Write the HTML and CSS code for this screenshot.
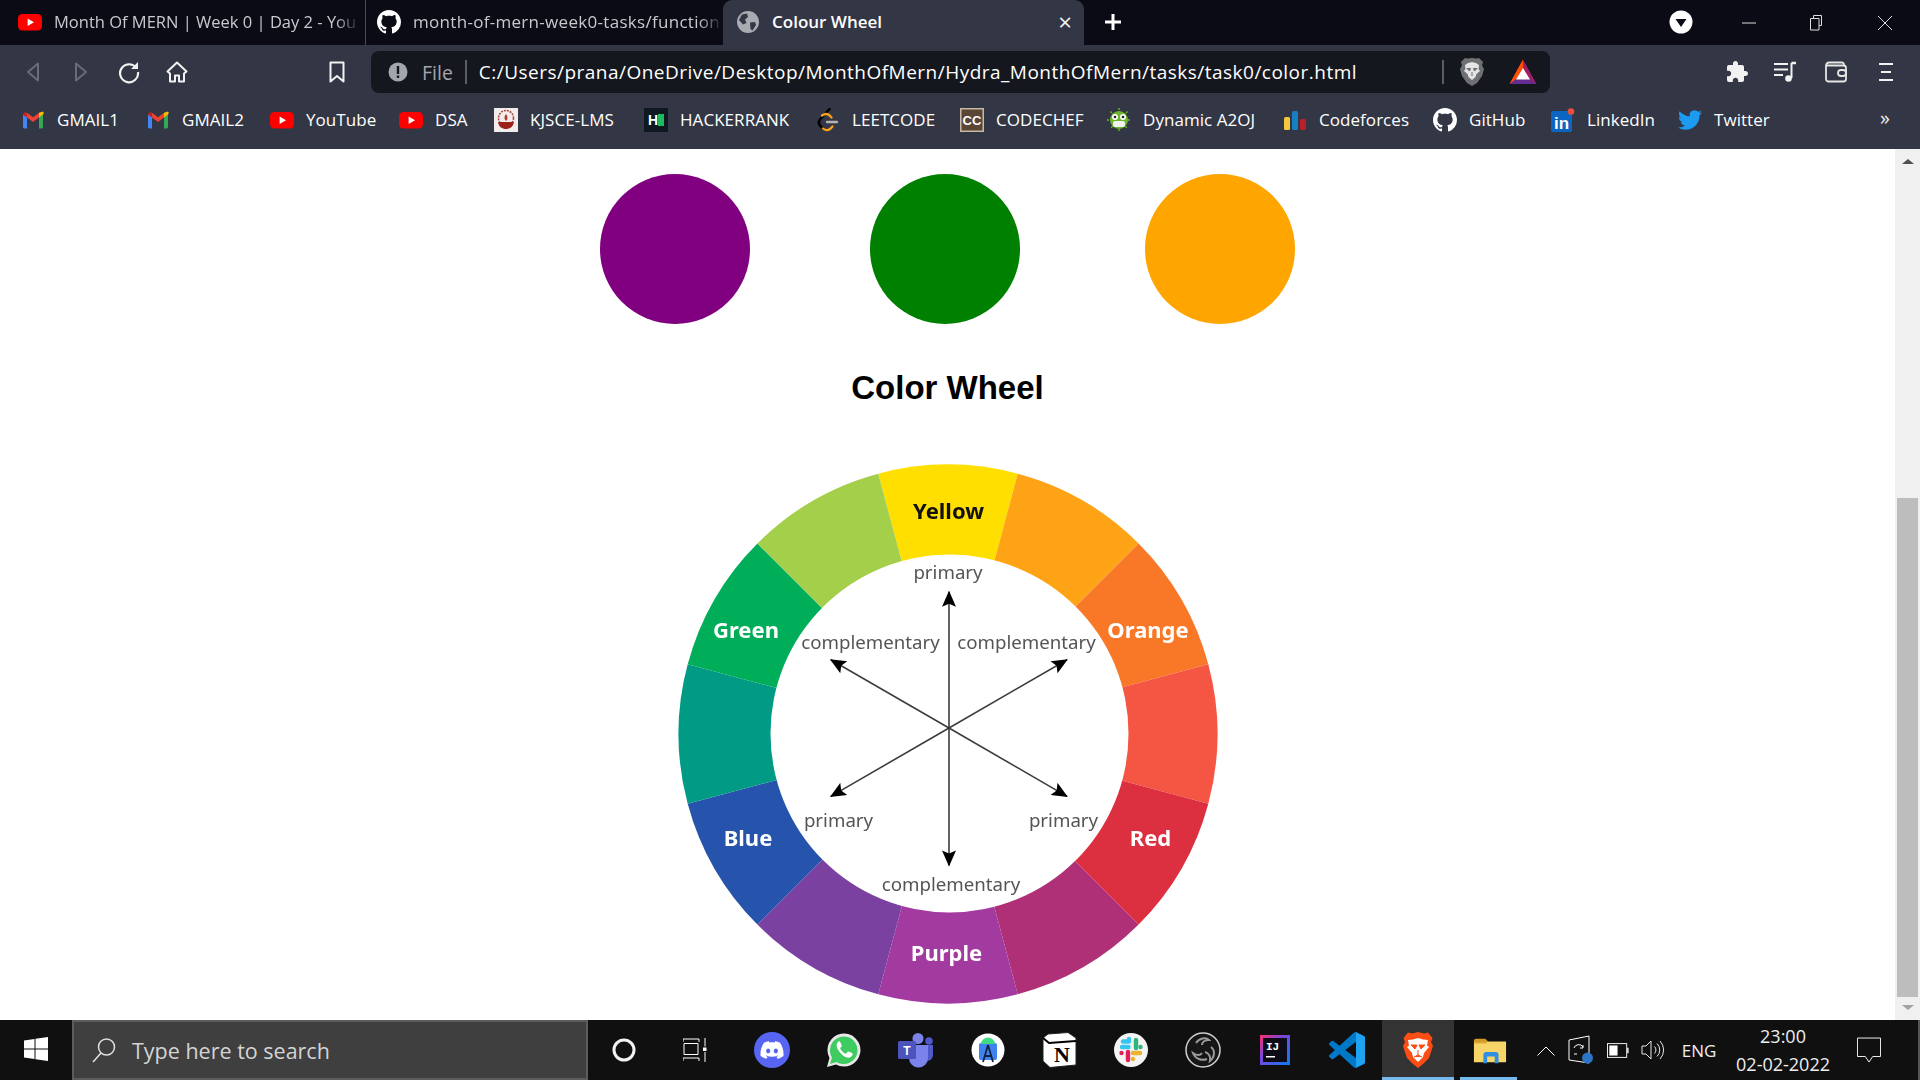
FILE: index.html
```html
<!DOCTYPE html>
<html lang="en">
<head>
<meta charset="utf-8">
<title>Colour Wheel</title>
<link rel="stylesheet" href="styles.css">
</head>
<body>
<svg class="defs" width="0" height="0" aria-hidden="true">
  <defs>
    <symbol id="i-youtube" viewBox="0 0 24 24"><rect x="0" y="4" width="24" height="16.5" rx="4.5" fill="#ff0000"/><path d="M9.6 8.4 16 12.2 9.6 16z" fill="#fff"/></symbol>
    <symbol id="i-gmail" viewBox="0 0 24 24"><path d="M2 20.5V6.5L6 9v11.5H3.5A1.5 1.5 0 0 1 2 19z" fill="#4285f4"/><path d="M18 20.5V9l4-2.500V19a1.500 1.500 0 0 1-1.500 1.500z" fill="#34a853"/><path d="M18 4.700 22 3.500A2 2 0 0 1 22 6.500L18 9.500z" fill="#fbbc04"/><path d="M6 9.500V4.700L12 9.200 18 4.700V9.500L12 14z" fill="#ea4335"/><path d="M2 6.500A2.600 2.600 0 0 1 6 4.700V9.500z" fill="#c5221f"/></symbol>
    <symbol id="i-github" viewBox="0 0 16 16"><path fill="#fff" d="M8 0C3.58 0 0 3.58 0 8c0 3.54 2.29 6.530 5.470 7.590.4.07.55-.17.55-.38 0-.19-.01-.82-.01-1.490-2.010.37-2.530-.49-2.690-.94-.09-.23-.48-.94-.82-1.130-.28-.15-.68-.52-.01-.53.63-.01 1.080.58 1.230.82.72 1.210 1.870.87 2.330.66.07-.52.28-.87.51-1.070-1.780-.2-3.640-.89-3.640-3.950 0-.87.31-1.590.82-2.150-.08-.2-.36-1.020.08-2.120 0 0 .67-.21 2.200.82.64-.18 1.320-.27 2-.27.68 0 1.360.09 2 .27 1.530-1.040 2.200-.82 2.200-.82.44 1.100.16 1.920.08 2.120.51.56.82 1.270.82 2.150 0 3.070-1.870 3.750-3.650 3.950.29.25.54.73.54 1.480 0 1.070-.01 1.930-.01 2.200 0 .21.15.46.55.38A8.013 8.013 0 0 0 16 8c0-4.420-3.580-8-8-8z"/></symbol>
  </defs>
</svg>

<header class="tabstrip">
  <div class="tab tab-first">
    <svg class="fav"><use href="#i-youtube"/></svg>
    <span class="tab-title">Month Of MERN | Week 0 | Day 2 - You</span>
  </div>
  <div class="tab tab-second">
    <svg class="fav"><use href="#i-github"/></svg>
    <span class="tab-title tab-title-long">month-of-mern-week0-tasks/function</span>
  </div>
  <div class="tab tab-active">
    <svg class="fav" viewBox="0 0 24 24"><circle cx="12" cy="12" r="11" fill="#a9abb2"/><path d="M6 4.500 11 3.500 12 7 9 9.500 10.500 13 7 14.500 3 10zM14 12.500 19 12 20 15 16.500 20.500 14.500 19z" fill="#333644"/></svg>
    <span class="tab-title-active">Colour Wheel</span>
    <span class="tab-close">×</span>
  </div>
  <svg class="newtab" viewBox="0 0 20 20"><path d="M10 2v16M2 10h16" stroke="#fff" stroke-width="3"/></svg>
  <svg class="profile" viewBox="0 0 24 24"><circle cx="12" cy="12" r="11.500" fill="#fff"/><path d="M6.500 9h11L12 17z" fill="#0a0b14"/></svg>
  <div class="winbtn"><svg viewBox="0 0 16 16" class="winicon"><path d="M1 8h14" stroke="#ddd" stroke-width="1"/></svg></div>
  <div class="winbtn"><svg viewBox="0 0 16 16" class="winicon"><path d="M4.500 3V.5h8v10H10M1.500 3.500h8.500V15H1.500z" fill="none" stroke="#ddd" stroke-width="1"/></svg></div>
  <div class="winbtn"><svg viewBox="0 0 16 16" class="winicon"><path d="M1 1l14 14M15 1 1 15" stroke="#ddd" stroke-width="1"/></svg></div>
</header>

<nav class="navbar">
  <svg class="navicon" viewBox="0 0 24 24"><path d="M17 3.500v17L7 12z" fill="none" stroke="#686b78" stroke-width="2" stroke-linejoin="round"/></svg>
  <svg class="navicon nav-gap" viewBox="0 0 24 24"><path d="M7 3.500v17L17 12z" fill="none" stroke="#686b78" stroke-width="2" stroke-linejoin="round"/></svg>
  <svg class="navicon nav-gap" viewBox="0 0 24 24"><path d="M19 7.500A9 9 0 1 0 21 12" fill="none" stroke="#f2f2f2" stroke-width="2.200"/><path d="M21 2v7h-7z" fill="#f2f2f2"/></svg>
  <svg class="navicon nav-gap" viewBox="0 0 24 24"><path d="M12 2.500 2.500 11.500 5 13.500V21.500H10V15.500H14V21.500H19V13.500L21.500 11.500z" fill="none" stroke="#f2f2f2" stroke-width="2" stroke-linejoin="round"/></svg>
  <svg class="navicon nav-bookmark" viewBox="0 0 24 24"><path d="M5.500 2.500h13v19L12 16l-6.500 5.500z" fill="none" stroke="#f2f2f2" stroke-width="2" stroke-linejoin="round"/></svg>
  <div class="omnibox">
    <svg class="info" viewBox="0 0 20 20"><circle cx="10" cy="10" r="9.500" fill="#a4a6ad"/><rect x="8.800" y="4" width="2.400" height="8" fill="#15171e"/><rect x="8.800" y="13.500" width="2.400" height="2.400" fill="#15171e"/></svg>
    <span class="file-label">File</span>
    <span class="omni-sep"></span>
    <span class="url">C:/Users/prana/OneDrive/Desktop/MonthOfMern/Hydra_MonthOfMern/tasks/task0/color.html</span>
    <span class="omni-sep"></span>
    <svg class="shield" viewBox="0 0 26 30"><path d="M13 1 17.500 1.500 20 1 24 5 23 8.500 25 12 23 19 18 26 13 29 8 26 3 19 1 12 3 8.500 2 5 6 1 8.500 1.500z" fill="#6e7073"/><path d="M13 5 17 6 20 8 19.500 12 21 14 17.500 17 16.500 20 13 23 9.500 20 8.500 17 5 14 6.500 12 6 8 9 6z" fill="#e4e4e4"/><path d="M8 11.500h3.500l-1 2.500zM18 11.500h-3.500l1 2.500zM13 15v4" fill="#6e7073" stroke="#6e7073"/></svg>
    <svg class="bat" viewBox="0 0 28 28"><path d="M14 1.500 27.500 26H.5z" fill="#9e1f63"/><path d="M14 1.500 .5 26 7 22 14 10z" fill="#ff5000"/><path d="M.5 26H27.500L21 21H7z" fill="#662d91"/><path d="M14 10 21 21.500H7z" fill="#fff"/></svg>
  </div>
  <svg class="navicon nav-puzzle" viewBox="0 0 24 24"><path fill="#f2f2f2" d="M20.500 11H19V7c0-1.100-.9-2-2-2h-4V3.500C13 2.120 11.880 1 10.500 1S8 2.120 8 3.500V5H4c-1.100 0-1.990.9-1.990 2v3.800H3.500c1.490 0 2.700 1.210 2.700 2.700s-1.210 2.700-2.700 2.700H2V20c0 1.100.9 2 2 2h3.800v-1.500c0-1.490 1.210-2.700 2.700-2.700s2.700 1.210 2.700 2.700V22H17c1.100 0 2-.9 2-2v-4h1.500c1.380 0 2.500-1.120 2.500-2.500S21.880 11 20.500 11z"/></svg>
  <svg class="navicon nav-gap" viewBox="0 0 24 24"><path d="M1 4h14M1 9.500h14M1 15h9M18.500 3v15" stroke="#f2f2f2" stroke-width="2" fill="none"/><path d="M18.500 3H23" stroke="#f2f2f2" stroke-width="2.500"/><circle cx="15.500" cy="18.500" r="3.300" fill="#f2f2f2"/></svg>
  <svg class="navicon nav-gap-wide" viewBox="0 0 24 24"><path d="M20 5.500V4.500a2 2 0 0 0-2-2H5A3 3 0 0 0 2 5.500V19a2.500 2.500 0 0 0 2.500 2.500h15A2.500 2.500 0 0 0 22 19V8a2.500 2.500 0 0 0-2.500-2.500H2.500" fill="none" stroke="#e6e6e6" stroke-width="1.800"/><rect x="14" y="10" width="8" height="6" rx="3" fill="#333644" stroke="#e6e6e6" stroke-width="1.800"/></svg>
  <svg class="navicon nav-gap-wide" viewBox="0 0 24 24"><path d="M4 4h14M6 12h10M4 20h14" stroke="#f2f2f2" stroke-width="2"/></svg>
</nav>

<div class="bookmarks">
  <div class="bm"><svg class="bm-icon"><use href="#i-gmail"/></svg><span>GMAIL1</span></div>
  <div class="bm"><svg class="bm-icon"><use href="#i-gmail"/></svg><span>GMAIL2</span></div>
  <div class="bm"><svg class="bm-icon"><use href="#i-youtube"/></svg><span>YouTube</span></div>
  <div class="bm"><svg class="bm-icon"><use href="#i-youtube"/></svg><span>DSA</span></div>
  <div class="bm"><svg class="bm-icon" viewBox="0 0 24 24"><rect width="24" height="24" fill="#f4ecea"/><circle cx="12" cy="10" r="7.500" fill="none" stroke="#a94a44" stroke-width="1.500" stroke-dasharray="2 1"/><path d="M4 14h16c-1 5-4 7-8 7s-7-2-8-7z" fill="#9c1f1a"/><path d="M12 6c2 2.500 2 5 0 7-2-2-2-4.500 0-7z" fill="#b03a30"/></svg><span>KJSCE-LMS</span></div>
  <div class="bm"><svg class="bm-icon" viewBox="0 0 24 24"><rect width="24" height="24" fill="#101820"/><text x="4" y="17" class="hr-h">H</text><rect x="14" y="6" width="6" height="12" fill="#1ebb5e"/></svg><span>HACKERRANK</span></div>
  <div class="bm"><svg class="bm-icon" viewBox="0 0 24 24"><path d="M13.500 1 4 11.500c-1.500 2-1.500 4 0 6L7 20.500" fill="none" stroke="#000" stroke-width="2.600" stroke-linecap="round"/><path d="M7 20.500c2 2 5 2 7 .5l2.500-2.500M6 7.500c2-1.500 5-2 7-.5l2.500 2.500" fill="none" stroke="#f89f1b" stroke-width="2.400" stroke-linecap="round"/><path d="M11 14h10" stroke="#b3b3b3" stroke-width="2.400" stroke-linecap="round"/></svg><span>LEETCODE</span></div>
  <div class="bm"><svg class="bm-icon" viewBox="0 0 24 24"><rect width="24" height="24" fill="#c8b9a6"/><rect x="1.500" y="1.500" width="21" height="21" fill="#5b4636"/><text x="12" y="17" class="cc">CC</text></svg><span>CODECHEF</span></div>
  <div class="bm"><svg class="bm-icon" viewBox="0 0 24 24"><circle cx="12" cy="12" r="9" fill="#6cb52d"/><path d="M12 0v24M0 12h24M3.500 3.500l17 17M20.500 3.500l-17 17" stroke="#6cb52d" stroke-width="1.400" stroke-dasharray="2 1"/><circle cx="8" cy="9" r="3" fill="#fff"/><circle cx="16" cy="9" r="3" fill="#fff"/><circle cx="8" cy="9" r="1.300" fill="#222"/><circle cx="16" cy="9" r="1.300" fill="#222"/><rect x="6" y="13" width="12" height="6" rx="2" fill="#f1f1f1"/></svg><span>Dynamic A2OJ</span></div>
  <div class="bm"><svg class="bm-icon" viewBox="0 0 24 24"><rect x="1" y="9" width="6" height="13" rx="1.500" fill="#f6c63f"/><rect x="9" y="3" width="6" height="19" rx="1.500" fill="#1a7fc1"/><rect x="17" y="11" width="6" height="11" rx="1.500" fill="#b8202a"/></svg><span>Codeforces</span></div>
  <div class="bm"><svg class="bm-icon"><use href="#i-github"/></svg><span>GitHub</span></div>
  <div class="bm"><svg class="bm-icon" viewBox="0 0 24 24"><rect x="0" y="3" width="21" height="21" rx="2" fill="#0a66c2"/><text x="10.500" y="20.500" class="li">in</text><circle cx="20" cy="3.500" r="3.300" fill="#e8503a"/></svg><span>LinkedIn</span></div>
  <div class="bm"><svg class="bm-icon" viewBox="0 0 24 24"><path fill="#1d9bf0" d="M23.953 4.570a10 10 0 0 1-2.825.775 4.958 4.958 0 0 0 2.163-2.723c-.951.555-2.005.959-3.127 1.184a4.920 4.920 0 0 0-8.384 4.482C7.690 8.095 4.067 6.130 1.640 3.162a4.822 4.822 0 0 0-.666 2.475c0 1.710.87 3.213 2.188 4.096a4.904 4.904 0 0 1-2.228-.616v.06a4.923 4.923 0 0 0 3.946 4.827 4.996 4.996 0 0 1-2.212.085 4.936 4.936 0 0 0 4.604 3.417 9.867 9.867 0 0 1-6.102 2.105c-.39 0-.779-.023-1.170-.067a13.995 13.995 0 0 0 7.557 2.209c9.053 0 13.998-7.496 13.998-13.985 0-.21 0-.42-.015-.63A9.935 9.935 0 0 0 24 4.590z"/></svg><span>Twitter</span></div>
  <span class="bm-more">»</span>
</div>

<div class="viewport">
  <main class="page">
    <div class="circles">
      <div class="circle circle-purple"></div>
      <div class="circle circle-green"></div>
      <div class="circle circle-orange"></div>
    </div>
    <h1 class="title">Color Wheel</h1>
    <svg class="wheel" viewBox="0 0 576 570">
      <defs>
        <marker id="head" viewBox="0 0 16 14" refX="15" refY="7" markerUnits="userSpaceOnUse" markerWidth="17" markerHeight="14" orient="auto"><path d="M0 0 16 7 0 14 3 7z" fill="#000"/></marker>
      </defs>
      <g class="wheel-art">
        <path fill="#ffdf00" d="M288 284 218.250 23.700A269.500 269.500 0 0 1 357.750 23.700Z"/>
        <path fill="#fea315" d="M288 284 357.750 23.700A269.500 269.500 0 0 1 478.600 93.400Z"/>
        <path fill="#f97827" d="M288 284 478.600 93.400A269.500 269.500 0 0 1 548.300 214.250Z"/>
        <path fill="#f45643" d="M288 284 548.300 214.250A269.500 269.500 0 0 1 548.300 353.750Z"/>
        <path fill="#dc3040" d="M288 284 548.300 353.750A269.500 269.500 0 0 1 478.600 474.600Z"/>
        <path fill="#b03078" d="M288 284 478.600 474.600A269.500 269.500 0 0 1 357.750 544.300Z"/>
        <path fill="#a23aa0" d="M288 284 357.750 544.300A269.500 269.500 0 0 1 218.250 544.300Z"/>
        <path fill="#7a41a0" d="M288 284 218.250 544.300A269.500 269.500 0 0 1 97.400 474.600Z"/>
        <path fill="#2654ac" d="M288 284 97.400 474.600A269.500 269.500 0 0 1 27.700 353.750Z"/>
        <path fill="#009a85" d="M288 284 27.700 353.750A269.500 269.500 0 0 1 27.700 214.250Z"/>
        <path fill="#00ae5a" d="M288 284 27.700 214.250A269.500 269.500 0 0 1 97.400 93.400Z"/>
        <path fill="#a3cf4a" d="M288 284 97.400 93.400A269.500 269.500 0 0 1 218.250 23.700Z"/>
        <circle cx="289.500" cy="283.500" r="179" fill="#fff"/>
        <g class="arrows">
          <line x1="289" y1="278" x2="289" y2="141.800" marker-end="url(#head)"/>
          <line x1="289" y1="278" x2="289" y2="415.500" marker-end="url(#head)"/>
          <line x1="289" y1="278" x2="170.800" y2="209.700" marker-end="url(#head)"/>
          <line x1="289" y1="278" x2="407" y2="209.700" marker-end="url(#head)"/>
          <line x1="289" y1="278" x2="170.800" y2="346.400" marker-end="url(#head)"/>
          <line x1="289" y1="278" x2="407" y2="346.400" marker-end="url(#head)"/>
        </g>
        <text class="wl wl-dark" x="288.500" y="69" text-anchor="middle">Yellow</text>
        <text class="wl" x="86" y="188" text-anchor="middle">Green</text>
        <text class="wl" x="488" y="188" text-anchor="middle">Orange</text>
        <text class="wl" x="88" y="396" text-anchor="middle">Blue</text>
        <text class="wl" x="490.500" y="396" text-anchor="middle">Red</text>
        <text class="wl" x="286.500" y="511" text-anchor="middle">Purple</text>
        <text class="sl" x="288" y="129" text-anchor="middle">primary</text>
        <text class="sl" x="210.500" y="199" text-anchor="middle">complementary</text>
        <text class="sl" x="366.500" y="199" text-anchor="middle">complementary</text>
        <text class="sl" x="178.500" y="377" text-anchor="middle">primary</text>
        <text class="sl" x="403.500" y="377" text-anchor="middle">primary</text>
        <text class="sl" x="291" y="440.600" text-anchor="middle">complementary</text>
      </g>
    </svg>
  </main>
  <aside class="scrollbar">
    <span class="sb-arrow sb-up"></span>
    <div class="sb-thumb"></div>
    <span class="sb-arrow sb-down"></span>
  </aside>
</div>

<footer class="taskbar">
  <div class="start"><svg class="win-logo" viewBox="0 0 24 24"><path fill="#fff" d="M0 3.500 10.500 2v9.500H0zM11.500 1.800 24 0v11.500H11.500zM0 12.500h10.500V22L0 20.500zM11.500 12.500H24V24l-12.500-1.800z"/></svg></div>
  <div class="search">
    <svg class="search-ic" viewBox="0 0 26 26"><circle cx="15.500" cy="10" r="8" fill="none" stroke="#e0e0e0" stroke-width="1.500"/><path d="M10 16 2 25" stroke="#e0e0e0" stroke-width="1.500"/></svg>
    <span class="search-text">Type here to search</span>
  </div>
  <div class="apps">
    <div class="app"><svg class="cortana" viewBox="0 0 24 24"><circle cx="12" cy="12" r="10" fill="none" stroke="#f2f2f2" stroke-width="3"/></svg></div>
    <div class="app"><svg class="taskview" viewBox="0 0 26 24"><path d="M0 4V1h16v3M1 5.500h14v11H1zM0 23v-3h16v3M22 0v8.500M22 14v10" fill="none" stroke="#fff" stroke-width="1"/><rect x="20" y="9.500" width="3.500" height="3.500" fill="#fff"/></svg></div>
    <div class="app app-pinned-first"><svg class="appicon" viewBox="0 0 36 36"><circle cx="18" cy="18" r="18" fill="#5865f2"/><g transform="translate(6.500 6.500) scale(.96)"><path fill="#fff" d="M20.317 4.370a19.790 19.790 0 0 0-4.885-1.515.074.074 0 0 0-.079.037c-.211.375-.445.865-.608 1.250-1.845-.276-3.680-.276-5.487 0-.164-.393-.406-.874-.618-1.250a.077.077 0 0 0-.078-.037 19.740 19.740 0 0 0-4.885 1.515.07.07 0 0 0-.032.028C.533 9.046-.319 13.580.099 18.058a.082.082 0 0 0 .031.056c2.053 1.508 4.041 2.423 5.993 3.030a.078.078 0 0 0 .084-.028c.462-.630.873-1.295 1.226-1.994a.076.076 0 0 0-.042-.106c-.653-.248-1.274-.550-1.872-.892a.077.077 0 0 1-.008-.128c.126-.094.252-.192.372-.291a.074.074 0 0 1 .078-.011c3.928 1.793 8.180 1.793 12.061 0a.074.074 0 0 1 .079.010c.12.099.246.198.373.292a.077.077 0 0 1-.007.128c-.598.349-1.219.645-1.873.891a.077.077 0 0 0-.041.107c.360.698.772 1.363 1.225 1.993a.076.076 0 0 0 .084.029c1.961-.607 3.950-1.522 6.002-3.030a.077.077 0 0 0 .031-.055c.500-5.177-.838-9.674-3.548-13.660a.061.061 0 0 0-.031-.029zM8.020 15.331c-1.183 0-2.157-1.086-2.157-2.419 0-1.333.956-2.419 2.157-2.419 1.211 0 2.176 1.095 2.157 2.419 0 1.333-.956 2.419-2.157 2.419zm7.975 0c-1.183 0-2.157-1.086-2.157-2.419 0-1.333.955-2.419 2.157-2.419 1.211 0 2.176 1.095 2.157 2.419 0 1.333-.946 2.419-2.157 2.419z"/></g></svg></div>
    <div class="app"><svg class="appicon" viewBox="0 0 36 36"><path d="M1 35 3.500 26A16.500 16.500 0 1 1 10 32.500z" fill="#e8e8e8"/><path d="M4 32 6 25.500A13.800 13.800 0 1 1 10.500 30z" fill="#3ecb5f"/><path d="M12.500 9.500c-1.500 1-2.500 3-1.500 6s5.500 9 10 10c2.500.5 4.500-.5 5.500-2.500.3-1 .2-1.500-.2-1.800l-3.500-1.700c-.5-.2-.9-.1-1.200.3l-1.300 1.700c-.3.300-.6.300-1 .1-2.200-1-4-2.700-5-4.800-.2-.4-.1-.7.2-1l1-1.300c.3-.3.300-.7.200-1.100l-1.500-3.500c-.3-.6-.9-.7-1.700-.4z" fill="#fff"/></svg></div>
    <div class="app"><svg class="appicon" viewBox="0 0 36 36"><circle cx="20" cy="6.500" r="5.500" fill="#7b83eb"/><circle cx="31" cy="9" r="3.800" fill="#5059c9"/><path d="M25 13h10v10a6 6 0 0 1-6 6h-4z" fill="#5059c9"/><path d="M11 13h19v13a9.500 9.500 0 0 1-19 0z" fill="#7b83eb"/><rect x="0" y="9" width="18" height="18" rx="1.500" fill="#4b53bc"/><text x="9" y="23" class="teams-t">T</text></svg></div>
    <div class="app"><svg class="appicon" viewBox="0 0 36 36"><circle cx="18" cy="18" r="16.500" fill="#fff"/><rect x="9" y="11" width="18" height="17" rx="2" fill="#3f83f0"/><path d="M11 12a7 6.500 0 0 1 14 0z" fill="#3ddc84"/><path d="M18 13 13 30M18 13 23 30M15 24h6" stroke="#12233f" stroke-width="1.800" fill="none"/></svg></div>
    <div class="app"><svg class="appicon" viewBox="0 0 36 36"><path d="M7 2 27 .5 35 6V33L9 35.500 2 29V6z" fill="#fff" stroke="#222" stroke-width="1"/><path d="M2 6l6 5 27-2" stroke="#000" fill="none" stroke-width="2"/><text x="21" y="30" class="notion-n">N</text></svg></div>
    <div class="app"><svg class="appicon" viewBox="0 0 36 36"><circle cx="18" cy="18" r="17" fill="#f4f4f4"/><g stroke-width="4.400" stroke-linecap="round"><path d="M16 9.500H10" stroke="#36c5f0"/><path d="M16 7v0" stroke="#36c5f0"/><path d="M23 8v8" stroke="#2eb67d"/><path d="M27.500 15v0" stroke="#2eb67d"/><path d="M20 21h7" stroke="#ecb22e"/><path d="M20 27v0" stroke="#ecb22e"/><path d="M15 20v8" stroke="#e01e5a"/><path d="M8.500 21h0" stroke="#e01e5a"/><path d="M15.500 15H9" stroke="#36c5f0"/></g></svg></div>
    <div class="app"><svg class="appicon" viewBox="0 0 36 36"><circle cx="18" cy="18" r="17" fill="#161616" stroke="#cfcfcf" stroke-width="1.500"/><g fill="none" stroke="#9a9a9a" stroke-width="2"><path d="M11 11c3-5 10-6 13-3-4 0-7 2-7 5"/><path d="M26 15c5 4 3 11-1 14 1-4-1-8-5-9"/><path d="M22 27c-5 2-12 0-14-6 3 2 7 3 9 0"/></g></svg></div>
    <div class="app"><svg class="appicon appicon-ij" viewBox="0 0 30 30"><defs><linearGradient id="ij" x1="0" y1="0" x2="1" y2="1"><stop offset="0" stop-color="#fd2e70"/><stop offset=".4" stop-color="#7a46d8"/><stop offset="1" stop-color="#087cfa"/></linearGradient></defs><rect width="30" height="30" fill="url(#ij)"/><rect x="3" y="3" width="24" height="24" fill="#0c0b16"/><text x="6" y="15" class="ij-t">IJ</text><rect x="6" y="21" width="9" height="1.500" fill="#fff"/></svg></div>
    <div class="app"><svg class="appicon" viewBox="0 0 24 24"><path fill="#0078c8" d="M23.150 2.587 18.210.21a1.494 1.494 0 0 0-1.705.29l-9.460 8.630-4.120-3.128a.999.999 0 0 0-1.276.057L.327 7.261A1 1 0 0 0 .326 8.740L3.899 12 .326 15.260a1 1 0 0 0 .001 1.479L1.650 17.940a.999.999 0 0 0 1.276.057l4.120-3.128 9.460 8.630a1.492 1.492 0 0 0 1.704.29l4.942-2.377A1.500 1.500 0 0 0 24 20.060V3.939a1.500 1.500 0 0 0-.85-1.352zm-5.146 14.861L10.826 12l7.178-5.448v10.896z"/><path fill="#1fa3f0" d="M18 .15 23.150 2.587A1.500 1.500 0 0 1 24 3.939V20.060a1.500 1.500 0 0 1-.85 1.353L18 23.850z"/></svg></div>
    <div class="app app-current"><svg class="appicon" viewBox="0 0 30 36"><path d="M15 0 21 1.500 25 .5 29.500 6 28 10 30 14 26 26 20 32 15 36 10 32 4 26 0 14 2 10 .5 6 5 .5 9 1.500z" fill="#fb4d14"/><path d="M15 6 20 7.500 25 8 24 13.500 26 15 21 21 20 25 15 30 10 25 9 21 4 15 6 13.500 5 8 10 7.500z" fill="#fff"/><path d="M8 13h6l-2 4zM22 13h-6l2 4zM15 18v5M11 25l4-2 4 2" stroke="#fb4d14" fill="#fb4d14"/></svg></div>
    <div class="app app-open"><svg class="appicon appicon-wide" viewBox="0 0 36 32"><path d="M1 6a2 2 0 0 1 2-2h10l3 3H1z" fill="#d39b22"/><path d="M1 7h34v22H1z" fill="#f8d568"/><path d="M1 7h15l-3 2H1z" fill="#e3a92e"/><path d="M11 30V21a3 3 0 0 1 3-3h10a3 3 0 0 1 3 3v9h-4v-7H15v7z" fill="#2f8fe3"/></svg></div>
  </div>
  <div class="tray">
    <svg class="chev" viewBox="0 0 18 10"><path d="M.5 9.500 9 1l8.500 8.500" fill="none" stroke="#fff" stroke-width="1"/></svg>
    <svg class="tray-net" viewBox="0 0 26 30"><path d="M1 5 21 1V28L1 25z" fill="none" stroke="#fff"/><path d="M6 13a5 5 0 0 1 9-1M15 10v3h-3M6 19h3" fill="none" stroke="#fff"/><circle cx="19.500" cy="23" r="5.500" fill="#2c74c4"/></svg>
    <svg class="tray-bat" viewBox="0 0 24 16"><rect x=".5" y=".5" width="21" height="15" fill="none" stroke="#fff"/><rect x="2.500" y="2.500" width="9" height="11" fill="#fff"/><rect x="22" y="5" width="1.500" height="6" fill="#fff"/></svg>
    <svg class="tray-vol" viewBox="0 0 24 24"><path d="M1 8h4l5-5v18l-5-5H1zM13.500 8.500a5 5 0 0 1 0 7M16 5.500a9 9 0 0 1 0 13M19 3a13 13 0 0 1 0 18" fill="none" stroke="#e6e6e6"/></svg>
    <span class="tray-lang">ENG</span>
    <div class="clock"><span>23:00</span><span>02-02-2022</span></div>
    <svg class="notif" viewBox="0 0 26 28"><path d="M.5.5h25v20H17l-4 6-4-6H.5z" fill="none" stroke="#fff"/></svg>
    <span class="show-desktop"></span>
  </div>
</footer>
</body>
</html>
```

FILE: styles.css
```css
* { box-sizing: border-box; }
html, body { margin: 0; height: 100%; overflow: hidden; }
body {
  display: flex;
  flex-direction: column;
  height: 1080px;
  font-family: "Open Sans", "Noto Sans", sans-serif;
  background: #fff;
}
.defs { position: absolute; }

/* tab strip */
.tabstrip {
  display: flex;
  align-items: stretch;
  height: 45px;
  padding-right: 1px;
  background: #0a0b14;
  color: #c9cacd;
  font-size: 16.5px;
}
.tab { display: flex; align-items: center; gap: 12px; overflow: hidden; padding-bottom: 2px; }
.tab-first { width: 366px; padding: 0 5px 2px 18px; border-right: 1px solid #4a4b55; }
.tab-second { width: 357px; padding: 0 0 2px 11px; }
.fav { width: 24px; height: 24px; flex: none; }
.tab-title {
  flex: 1;
  white-space: nowrap;
  overflow: hidden;
  -webkit-mask-image: linear-gradient(90deg, #000 92%, transparent);
  mask-image: linear-gradient(90deg, #000 92%, transparent);
}
.tab-title-long { font-size: 17px; letter-spacing: .3px; }
.tab-active {
  width: 361px;
  padding: 0 12px 2px 13px;
  background: #333644;
  border-radius: 9px 9px 0 0;
  color: #fff;
}
.tab-title-active { flex: 1; font-size: 17px; font-weight: 600; }
.tab-close { font-size: 24px; line-height: 1; color: #f0f0f0; }
.newtab { width: 20px; height: 20px; margin: 12px 0 0 19px; }
.profile { width: 24px; height: 24px; margin: 10px 22px 0 auto; }
.winbtn { width: 68px; display: flex; align-items: center; justify-content: center; }
.winicon { width: 16px; height: 16px; }

/* nav */
.navbar {
  display: flex;
  align-items: center;
  height: 50px;
  padding: 4px 0 0 21px;
  background: #333644;
}
.navicon { width: 24px; height: 24px; flex: none; }
.nav-gap { margin-left: 24px; }
.nav-gap-wide { margin-left: 27px; }
.nav-bookmark { margin-left: 136px; }
.nav-puzzle { margin-left: 175px; }
.omnibox {
  display: flex;
  align-items: center;
  width: 1179px;
  height: 42px;
  margin-left: 22px;
  padding: 0 13px 0 17px;
  background: #15171e;
  border-radius: 8px;
}
.info { width: 20px; height: 20px; flex: none; }
.file-label { margin-left: 14px; color: #a4a6ad; font-size: 19.5px; }
.omni-sep { width: 2px; height: 24px; background: #5c5e66; flex: none; }
.file-label + .omni-sep { margin-left: 12px; }
.url { flex: 1; margin-left: 12px; color: #fff; font-size: 19px; letter-spacing: .48px; white-space: nowrap; }
.shield { width: 26px; height: 30px; margin-left: 15px; flex: none; }
.bat { width: 28px; height: 28px; margin-left: 24px; flex: none; }

/* bookmarks */
.bookmarks {
  display: grid;
  grid-template-columns: 125px 124px 129px 95px 150px 172px 144px 147px 176px 150px 118px 127px 1fr auto;
  align-items: center;
  height: 54px;
  padding: 0 30px 5px 21px;
  background: #333644;
  color: #fff;
  font-size: 17px;
  letter-spacing: .05px;
}
.bm { display: flex; align-items: center; gap: 12px; white-space: nowrap; }
.bm-icon { width: 24px; height: 24px; flex: none; }
.bm-more { margin-bottom: 4px; font-size: 20px; color: #eee; }
.hr-h { font: 700 14px "Liberation Sans", sans-serif; fill: #fff; }
.cc { font: 700 13px "Liberation Sans", sans-serif; fill: #fff; text-anchor: middle; }
.li { font: 700 17px "Liberation Sans", sans-serif; fill: #fff; text-anchor: middle; }

/* page */
.viewport { flex: 1; display: flex; min-height: 0; }
.page { flex: 1; min-width: 0; overflow: hidden; padding-top: 25px; background: #fff; }
.circles { display: flex; padding-left: 600px; }
.circle { width: 150px; height: 150px; border-radius: 50%; }
.circle-purple { background: #800080; }
.circle-green { background: #008000; margin-left: 120px; }
.circle-orange { background: #ffa500; margin-left: 125px; }
.title {
  margin: 45px 0 44px;
  text-align: center;
  font: 700 33px/37px "Liberation Sans", Arial, sans-serif;
  color: #000;
}
.wheel { display: block; width: 576px; height: 570px; margin: 0 auto; }
.wheel-art { filter: blur(.6px); }
.arrows line { stroke: #3d3d3d; stroke-width: 1.6; }
.wl { font: 700 22px "Noto Sans", "Open Sans", sans-serif; fill: #fff; }
.wl-dark { fill: #111; }
.sl { font: 400 18.7px "Noto Sans", "Open Sans", sans-serif; fill: #555; }

/* scrollbar */
.scrollbar {
  width: 25px;
  display: flex;
  flex-direction: column;
  align-items: center;
  background: #f0f0f0;
}
.sb-arrow { width: 0; height: 0; border-left: 6px solid transparent; border-right: 6px solid transparent; }
.sb-up { margin-top: 10px; border-bottom: 5px solid #505050; }
.sb-thumb { width: 21px; height: 499px; margin-top: 334px; background: #bdbdbd; }
.sb-down { margin-top: 8px; border-top: 5px solid #a3a3a3; }

/* taskbar */
.taskbar { display: flex; height: 60px; background: #101010; color: #fff; }
.start { width: 72px; display: flex; align-items: center; justify-content: center; }
.win-logo { width: 24px; height: 24px; margin-right: 1px; margin-bottom: 2px; }
.search {
  display: flex;
  align-items: center;
  width: 516px;
  padding-left: 17px;
  background: #3f3f3f;
  border: 2px solid #5c5c5c;
}
.search-ic { width: 26px; height: 26px; flex: none; }
.search-text { margin-left: 15px; font-size: 21.5px; color: #d4d4d4; }
.apps { display: flex; width: 933px; }
.app {
  flex: none;
  width: 71.770px;
  display: flex;
  align-items: center;
  justify-content: center;
  border-bottom: 3px solid transparent;
  padding-top: 3px;
}
.app-pinned-first { margin-left: 5px; }
.app-current { background: #333; border-bottom-color: #76b9ed; }
.app-open { position: relative; }
.app-open::after {
  content: "";
  position: absolute;
  left: 6px;
  right: 9px;
  bottom: -3px;
  height: 3px;
  background: #76b9ed;
}
.appicon { width: 36px; height: 36px; }
.appicon-wide { width: 34px; height: 32px; }
.appicon-ij { width: 30px; height: 30px; }
.cortana { width: 24px; height: 24px; }
.taskview { width: 26px; height: 24px; }
.teams-t { font: 700 12px "Liberation Sans", sans-serif; fill: #fff; text-anchor: middle; }
.notion-n { font: 700 22px "Liberation Serif", serif; fill: #000; text-anchor: middle; }
.ij-t { font: 700 11px "Liberation Mono", monospace; fill: #fff; }

.tray {
  flex: 1;
  min-width: 0;
  display: grid;
  grid-template-columns: 50px 20px 54px 16px 76px 92px 80px 1fr;
  align-items: center;
  justify-items: center;
}
.chev { width: 18px; height: 10px; margin-top: 2px; }
.tray-net { width: 26px; height: 30px; }
.tray-bat { width: 22px; height: 15px; }
.tray-vol { width: 24px; height: 24px; }
.tray-lang { font-size: 17px; color: #eee; }
.clock {
  display: flex;
  flex-direction: column;
  align-items: center;
  gap: 6px;
  font-size: 18px;
  line-height: 22px;
  white-space: nowrap;
  color: #eee;
}
.notif { width: 24px; height: 27px; }
.show-desktop { justify-self: end; width: 2px; height: 60px; background: #555; }
```
